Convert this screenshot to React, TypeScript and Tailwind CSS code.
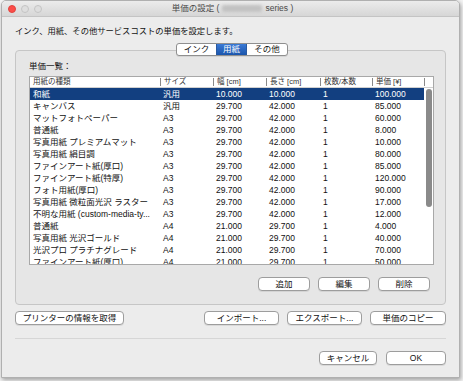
const rows = [
  ["和紙", "汎用", "10.000", "10.000", "1", "100.000"],
  ["キャンバス", "汎用", "29.700", "42.000", "1", "85.000"],
  ["マットフォトペーパー", "A3", "29.700", "42.000", "1", "60.000"],
  ["普通紙", "A3", "29.700", "42.000", "1", "8.000"],
  ["写真用紙 プレミアムマット", "A3", "29.700", "42.000", "1", "10.000"],
  ["写真用紙 絹目調", "A3", "29.700", "42.000", "1", "80.000"],
  ["ファインアート紙(厚口)", "A3", "29.700", "42.000", "1", "85.000"],
  ["ファインアート紙(特厚)", "A3", "29.700", "42.000", "1", "120.000"],
  ["フォト用紙(厚口)", "A3", "29.700", "42.000", "1", "90.000"],
  ["写真用紙 微粒面光沢 ラスター", "A3", "29.700", "42.000", "1", "17.000"],
  ["不明な用紙 (custom-media-ty...", "A3", "29.700", "42.000", "1", "12.000"],
  ["普通紙", "A4", "21.000", "29.700", "1", "4.000"],
  ["写真用紙 光沢ゴールド", "A4", "21.000", "29.700", "1", "40.000"],
  ["光沢プロ プラチナグレード", "A4", "21.000", "29.700", "1", "70.000"],
  ["ファインアート紙(厚口)", "A4", "21.000", "29.700", "1", "50.000"],
];

const headers = ["用紙の種類", "サイズ", "幅 [cm]", "長さ [cm]", "枚数/本数", "単価 [¥]"];

const cols = "grid grid-cols-[130px_53px_53px_54px_52px_52px]";

function Button({ label, className }: { label: string; className: string }) {
  return (
    <button className={`h-[14px] rounded-[4px] border border-[#9d9d9d] bg-white text-[8.5px] leading-none text-[#111] shadow-[0_1px_0_rgba(0,0,0,0.08)] ${className}`}>
      {label}
    </button>
  );
}

export default function App() {
  return (
    <div
      className="w-[463px] h-[381px] bg-[#f4f4f4] overflow-hidden"
      style={{ fontFamily: '"Liberation Sans", "Noto Sans CJK JP", sans-serif' }}
    >
      <div className="w-[459px] h-[378px] ml-[1px] flex flex-col bg-[#ececec] border border-[#b0b0b0] rounded-t-[5px] shadow-[1px_2px_4px_rgba(0,0,0,0.35)] overflow-hidden">
        {/* title bar */}
        <div className="h-[16px] shrink-0 grid grid-cols-[1fr_auto_1fr] items-center bg-gradient-to-b from-[#ececec] to-[#d6d6d6] border-b border-[#c4c4c4]">
          <div className="flex items-center gap-[5px] pl-[6px]">
            <span className="w-[8px] h-[8px] rounded-full bg-[#fc4d49] border border-[#e0443e]" />
            <span className="w-[8px] h-[8px] rounded-full bg-[#dedede] border border-[#c4c4c4]" />
            <span className="w-[8px] h-[8px] rounded-full bg-[#dedede] border border-[#c4c4c4]" />
          </div>
          <div className="flex items-center text-[8.5px] leading-none text-[#4a4a4a] pl-[4px]">
            <span>単価の設定 (</span>
            <span className="mx-[3px] w-[40px] h-[7px] rounded-[2px] bg-[#c2c2c2] blur-[1.5px]" />
            <span>series )</span>
          </div>
          <div />
        </div>

        {/* content */}
        <div className="flex flex-col px-[13px]">
          <p className="mt-[7px] h-[14px] text-[8.3px] leading-[14px] text-[#111]">
            インク、用紙、その他サービスコストの単価を設定します。
          </p>

          <div className="relative z-10 mt-[5px] flex justify-center">
            <div className="ml-[3px] flex h-[13px] rounded-[3px] border border-[#8f8f8f] bg-white text-[8.5px] leading-[11px] text-[#111] overflow-hidden shadow-[0_1px_0_rgba(0,0,0,0.08)]">
              <span className="w-[39px] text-center">インク</span>
              <span className="w-[31px] text-center text-white bg-gradient-to-b from-[#3b7ad6] to-[#1a55ab] border-x border-[#2a5aa0]">用紙</span>
              <span className="w-[40px] text-center">その他</span>
            </div>
          </div>

          {/* group box */}
          <div className="-mt-[6px] h-[255px] rounded-[4px] border border-[#c6c6c6] bg-[#e6e6e6] flex flex-col px-[13px]">
            <div className="mt-[9px] h-[12px] text-[8.5px] leading-[12px] text-[#111]">単価一覧：</div>

            <div className="mt-[4px] h-[189px] w-[405px] border border-[#a8a8a8] bg-white overflow-hidden flex flex-col text-[8.5px] text-[#111]">
              {/* header */}
              <div className="h-[11px] shrink-0 flex border-b border-[#d0d0d0] leading-[10px] text-[7.5px] text-[#333]">
                <div className={cols}>
                  {headers.map((h, i) => (
                    <div key={h} className="flex items-center">
                      {i > 0 && <span className="w-[1px] h-[8px] bg-[#8a8a8a] mr-[3px]" />}
                      <span className={i === 0 ? "pl-[3px]" : ""}>{h}</span>
                    </div>
                  ))}
                </div>
                <div className="flex items-center">
                  <span className="w-[1px] h-[8px] bg-[#8a8a8a]" />
                </div>
              </div>

              {/* body */}
              <div className="flex flex-1 min-h-0">
                <div className="w-[394px] flex flex-col">
                  {rows.map((r, i) => (
                    <div
                      key={i}
                      className={`${cols} h-[12px] shrink-0 leading-[12px] ${i === 0 ? "bg-[#123f80] text-white" : ""}`}
                    >
                      {r.map((c, j) => (
                        <div key={j} className="whitespace-nowrap overflow-hidden pl-[3px]">
                          {c}
                        </div>
                      ))}
                    </div>
                  ))}
                </div>
                <div className="flex-1 pl-[2px] pt-[1px]">
                  <div className="w-[6px] h-[118px] rounded-full bg-[#8a8a8a]" />
                </div>
              </div>
            </div>

            <div className="mt-[12px] flex justify-end gap-[8px] pr-[2px]">
              <Button label="追加" className="w-[52px]" />
              <Button label="編集" className="w-[52px]" />
              <Button label="削除" className="w-[52px]" />
            </div>
          </div>

          <div className="mt-[6px] flex items-center">
            <Button label="プリンターの情報を取得" className="w-[109px]" />
            <div className="flex-1" />
            <div className="flex gap-[8px]">
              <Button label="インポート..." className="w-[75px]" />
              <Button label="エクスポート..." className="w-[75px]" />
              <Button label="単価のコピー" className="w-[76px]" />
            </div>
          </div>

          <div className="mt-[13px] h-[1px] bg-[#d6d6d6]" />

          <div className="mt-[12px] flex justify-end gap-[9px]">
            <Button label="キャンセル" className="w-[58px]" />
            <Button label="OK" className="w-[60px]" />
          </div>
        </div>
      </div>
    </div>
  );
}
